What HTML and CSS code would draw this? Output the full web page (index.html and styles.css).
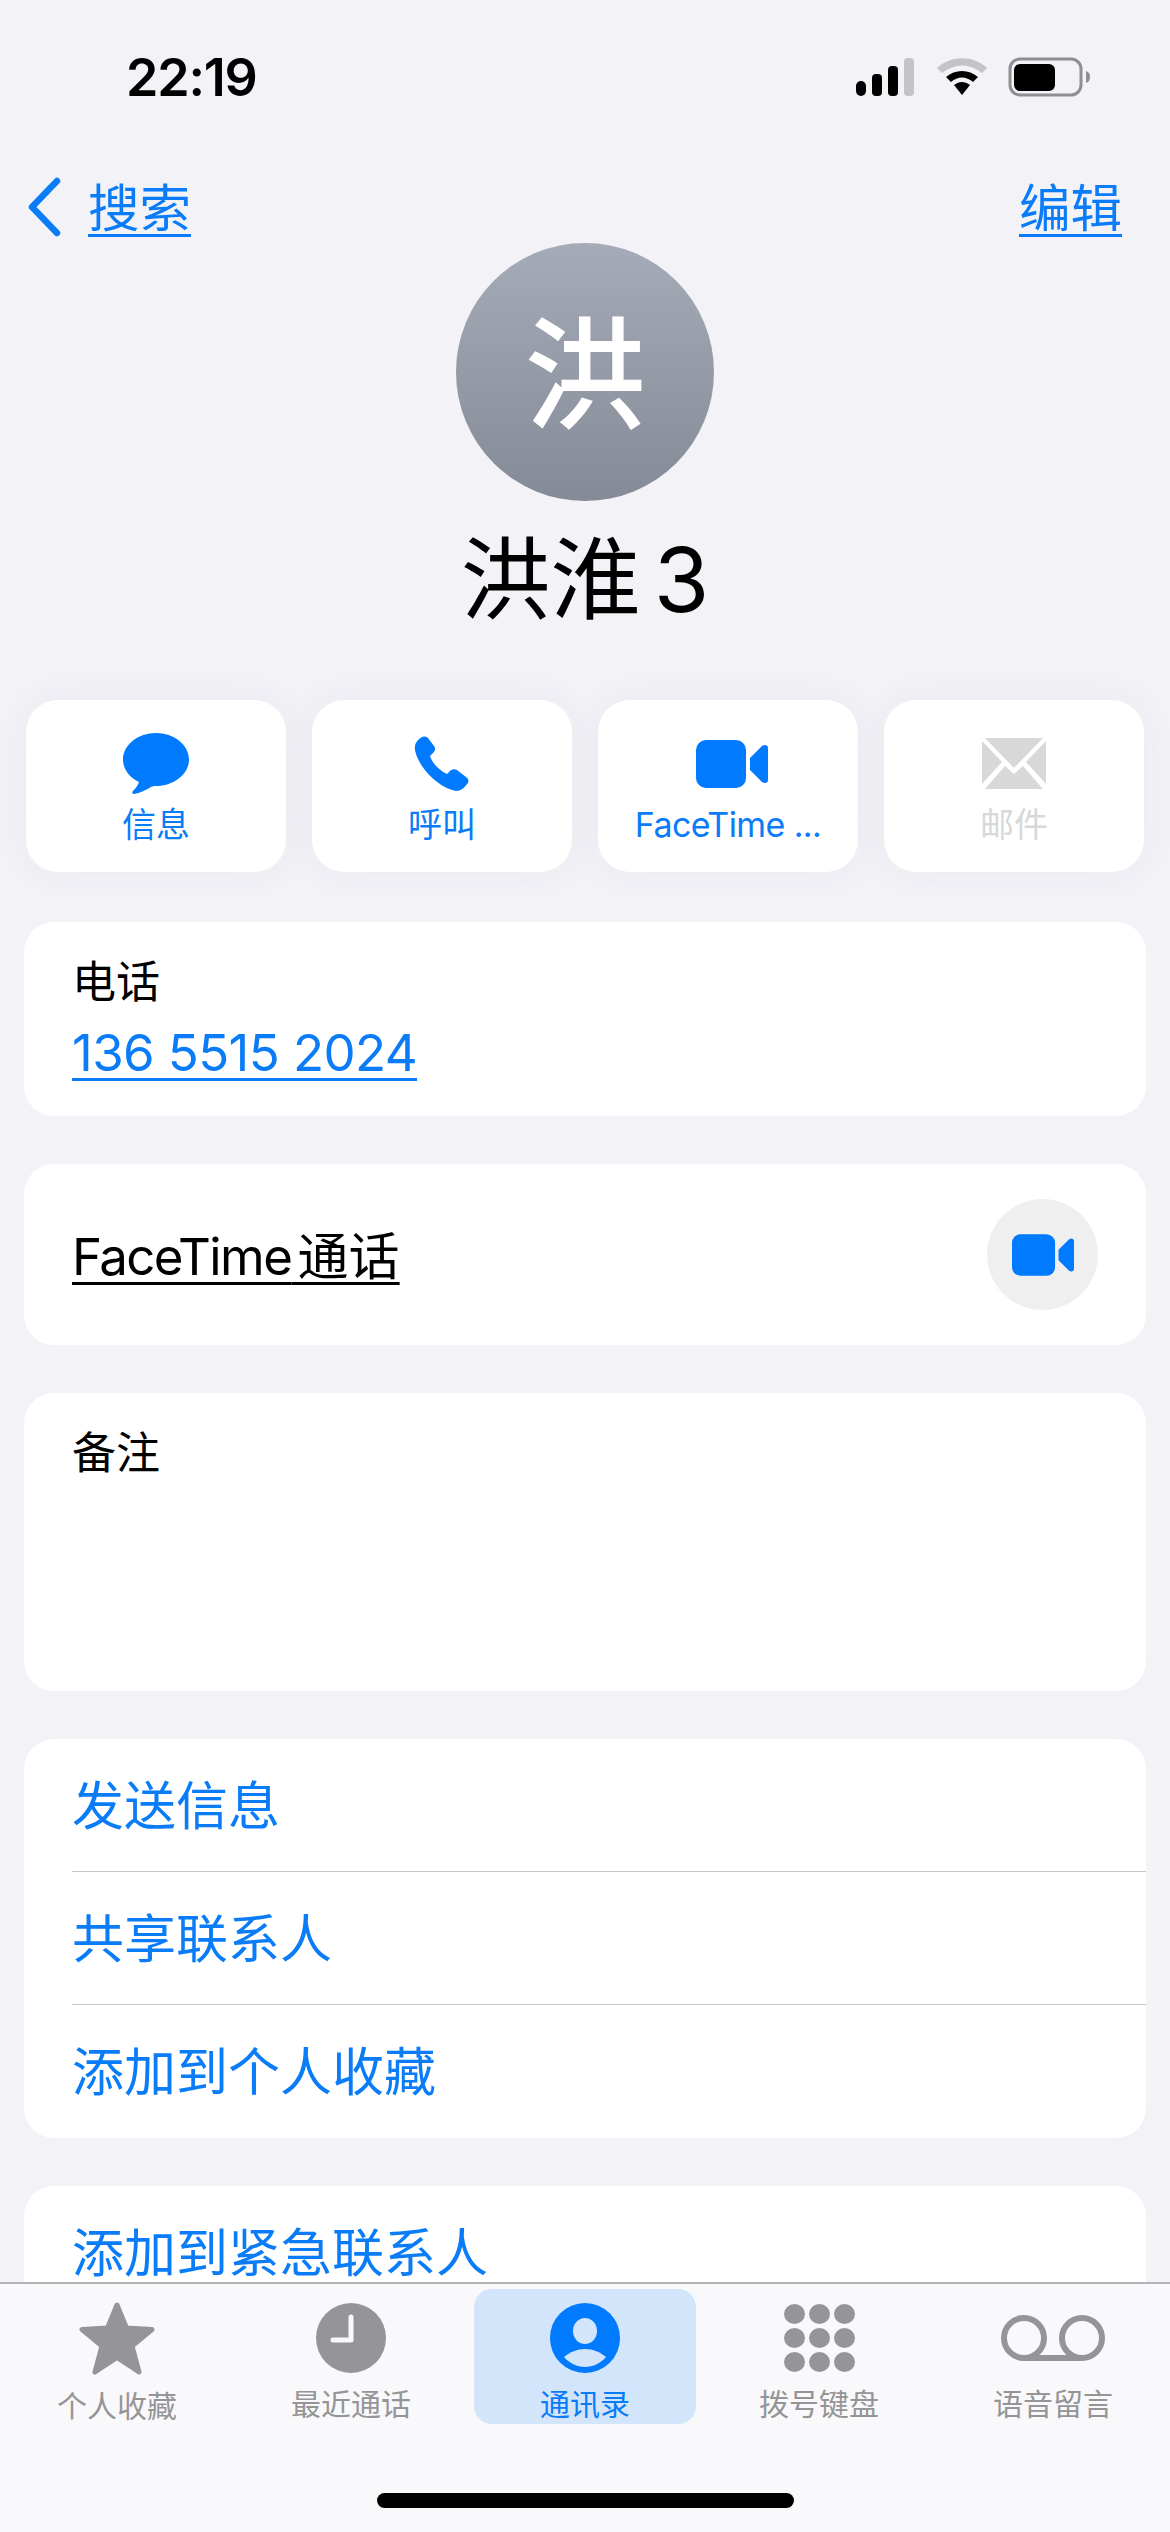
FILE: index.html
```html
<!DOCTYPE html>
<html lang="zh-CN">
  <head>
    <meta charset="UTF-8" />
    <meta name="viewport" content="width=device-width, initial-scale=1.0" />
    <title>洪淮 3</title>
    <link rel="stylesheet" href="styles.css">
  </head>
  <body>
    <div class="page">
      <div class="status-bar">
        <span class="time">22:19</span>
        <div class="status-icons">
          <svg class="signal" width="58" height="38" viewBox="0 0 58 38">
            <rect x="0" y="23" width="10" height="15" rx="5" fill="#000" />
            <rect x="16" y="16" width="10" height="22" rx="4" fill="#000" />
            <rect x="32" y="8" width="10" height="30" rx="4" fill="#000" />
            <rect x="48" y="0" width="10" height="38" rx="4" fill="#c4c4c8" />
          </svg>
          <svg class="wifi" width="50" height="38" viewBox="0 0 50 38">
            <path d="M0 10 C14 -3 36 -3 50 10 L45 15 C32 5 18 5 5 15 Z" fill="#c4c4c8" />
            <path d="M9 19 C18 11 32 11 41 19 L36 24 C29 18 21 18 14 24 Z" fill="#000" />
            <path d="M17 27 C22 23 28 23 33 27 L25 37 Z" fill="#000" />
          </svg>
          <svg class="battery" width="84" height="40" viewBox="0 0 84 40">
            <rect x="2" y="2" width="71" height="36" rx="10" fill="none" stroke="#8e8e93" stroke-width="3" />
            <rect x="6" y="7" width="41" height="27" rx="6" fill="#000" />
            <path d="M78 14 C81 15 82 17 82 20 C82 23 81 25 78 26 Z" fill="#8e8e93" />
          </svg>
        </div>
      </div>

      <div class="nav-bar">
        <a class="nav-back">
          <svg width="34" height="60" viewBox="0 0 34 60">
            <path d="M30 4 L5 30 L30 56" fill="none" stroke="#0a7cf7" stroke-width="6.5" stroke-linecap="round" stroke-linejoin="round" />
          </svg>
          <span class="link">搜索</span>
        </a>
        <a class="link">编辑</a>
      </div>

      <div class="contact-head">
        <div class="avatar">洪</div>
        <h1 class="contact-name">洪淮 3</h1>
      </div>

      <div class="action-row">
        <div class="action">
          <svg class="action-icon" width="66" height="62" viewBox="0 0 66 62">
            <path d="M33 0 C51 0 66 12 66 26.5 C66 41 51 53 33 53 C31 53 29.5 53 28 54 C23 57 17 60 11 61 C9 61 9 59 10 58 C13 55 15 52 16 49 C6 44 0 36 0 26.5 C0 12 15 0 33 0 Z" fill="#007aff" />
          </svg>
          <span>信息</span>
        </div>
        <div class="action">
          <svg class="action-icon" width="56" height="56" viewBox="0 0 56 56">
            <path d="M7 1.5 C9 0 12 0 14 2 L20 10 C22 13 21 15 19 17 L16 20 C18 27 26 35 33 38 L36 35 C38 33 41 32.5 43 34 L52 41 C55 43 55 46 53 48 C50 52 47 55 42 55 C30 53 16 42 8 30 C2 21 -1 12 2 7 C3 5 5 3 7 1.5 Z" fill="#007aff" />
          </svg>
          <span>呼叫</span>
        </div>
        <div class="action">
          <svg class="action-icon video-icon" width="72" height="48" viewBox="0 0 72 48">
            <rect x="0" y="0" width="50" height="48" rx="10" fill="#007aff" />
            <path d="M54 18 L66 6 C69 4 72 5 72 8 L72 40 C72 43 69 44 66 42 L54 30 Z" fill="#007aff" />
          </svg>
          <span class="action-latin">FaceTime ...</span>
        </div>
        <div class="action action-off">
          <svg class="action-icon" width="64" height="52" viewBox="0 0 64 52">
            <path d="M3 0 H61 L32 30 Z" fill="#d8d8d8" />
            <path d="M0 3 L20 24 L0 46 Z M64 3 L44 24 L64 46 Z" fill="#d8d8d8" />
            <path d="M3 51 L23 28 L32 36 L41 28 L61 51 Z" fill="#d8d8d8" />
          </svg>
          <span>邮件</span>
        </div>
      </div>

      <div class="card phone-card">
        <div class="field-label">电话</div>
        <a class="field-value link">136 5515 2024</a>
      </div>

      <div class="card facetime-card">
        <a class="facetime-label"><span class="facetime-word">FaceTime</span> 通话</a>
        <div class="round-btn">
          <svg width="62" height="42" viewBox="0 0 72 48">
            <rect x="0" y="0" width="50" height="48" rx="10" fill="#007aff" />
            <path d="M54 18 L66 6 C69 4 72 5 72 8 L72 40 C72 43 69 44 66 42 L54 30 Z" fill="#007aff" />
          </svg>
        </div>
      </div>

      <div class="card notes-card">
        <div class="field-label">备注</div>
      </div>

      <div class="card list-card">
        <div class="list-row">发送信息</div>
        <div class="list-row">共享联系人</div>
        <div class="list-row">添加到个人收藏</div>
      </div>

      <div class="card list-card">
        <div class="list-row">添加到紧急联系人</div>
      </div>

      <div class="tab-bar">
        <div class="tab">
          <div class="tab-icon">
            <svg width="76" height="74" viewBox="0 0 76 74">
              <path d="M38 3 L47.5 26 L73 27.5 L53 44 L60 70 L38 55.5 L16 70 L23 44 L3 27.5 L28.5 26 Z" fill="#959597" stroke="#959597" stroke-width="5" stroke-linejoin="round" />
            </svg>
          </div>
          <span>个人收藏</span>
        </div>
        <div class="tab">
          <div class="tab-icon">
            <svg width="70" height="70" viewBox="0 0 70 70">
              <circle cx="35" cy="35" r="35" fill="#959597" />
              <path d="M35 14 V37 H17" fill="none" stroke="#f9f9fb" stroke-width="5" stroke-linecap="round" stroke-linejoin="round" />
            </svg>
          </div>
          <span>最近通话</span>
        </div>
        <div class="tab tab-active">
          <div class="tab-icon">
            <svg width="70" height="70" viewBox="0 0 70 70">
              <circle cx="35" cy="35" r="35" fill="#007aff" />
              <ellipse cx="35" cy="28" rx="12" ry="13" fill="#d2e5fb" />
              <path d="M14 54 C20 49 27 46 35 46 C43 46 50 49 56 54 C51 60 43 64 35 64 C27 64 19 60 14 54 Z" fill="#d2e5fb" />
            </svg>
          </div>
          <span>通讯录</span>
        </div>
        <div class="tab">
          <div class="tab-icon">
            <div class="keypad">
              <i></i><i></i><i></i>
              <i></i><i></i><i></i>
              <i></i><i></i><i></i>
            </div>
          </div>
          <span>拨号键盘</span>
        </div>
        <div class="tab">
          <div class="tab-icon">
            <svg width="104" height="46" viewBox="0 0 104 46">
              <circle cx="23" cy="23" r="20" fill="none" stroke="#959597" stroke-width="6" />
              <circle cx="81" cy="23" r="20" fill="none" stroke="#959597" stroke-width="6" />
              <path d="M23 43 H81" fill="none" stroke="#959597" stroke-width="6" />
            </svg>
          </div>
          <span>语音留言</span>
        </div>
        <div class="home-bar"></div>
      </div>
    </div>
  </body>
</html>
```

FILE: styles.css
```css
body {
  margin: 0;
  padding: 0;
  font-family: Inter, "Noto Sans CJK SC", sans-serif;
  background-color: #f2f2f7;
  color: #000;
}

.page {
  position: relative;
  width: 1170px;
  height: 2532px;
  overflow: hidden;
}

.link {
  color: #0a7cf7;
  text-decoration: underline;
  text-decoration-thickness: 3px;
  text-underline-offset: 7px;
}

/* status bar */
.status-bar {
  display: flex;
  justify-content: space-between;
  align-items: center;
  height: 38px;
  padding: 58px 79px 0 126px;
}

.time {
  font-size: 52px;
  font-weight: 600;
  letter-spacing: -1.2px;
}

.status-icons {
  display: flex;
  align-items: center;
  gap: 21px;
}

.signal {
  margin-right: 2px;
}

.battery {
  margin-right: -1px;
}

/* nav */
.nav-bar {
  display: flex;
  justify-content: space-between;
  align-items: center;
  height: 60px;
  margin-top: 81px;
  padding: 0 48px 0 27px;
  font-size: 51.5px;
}

.nav-back {
  display: flex;
  align-items: center;
  gap: 27px;
}

.nav-bar .link {
  position: relative;
  top: -3px;
}

/* avatar + name */
.contact-head {
  display: flex;
  flex-direction: column;
  align-items: center;
  margin-top: 6px;
}

.avatar {
  display: flex;
  align-items: center;
  justify-content: center;
  box-sizing: border-box;
  width: 258px;
  height: 258px;
  padding-bottom: 14px;
  border-radius: 50%;
  background: linear-gradient(#a6abb8, #858a97);
  color: #fff;
  font-size: 122px;
  font-weight: 500;
}

.contact-name {
  margin: 15px 0 0;
  font-size: 90px;
  font-weight: 400;
  line-height: 128px;
  word-spacing: -12px;
}

/* four action buttons */
.action-row {
  display: flex;
  gap: 26px;
  margin: 56px 24px 0 26px;
}

.action {
  display: flex;
  flex-direction: column;
  align-items: center;
  width: 260px;
  height: 172px;
  border-radius: 32px;
  background-color: #fff;
  box-shadow: 0 0 40px rgba(60, 60, 90, 0.05);
  color: #0a7cf7;
  font-size: 34px;
  line-height: 44px;
}

.action-icon {
  display: block;
  margin-top: 33px;
  height: 62px;
}

.video-icon {
  margin-left: 8px;
}

.action span {
  margin-top: 8px;
}

.action .action-latin {
  letter-spacing: -0.6px;
}

.action-off {
  color: #d8d8d8;
}

/* cards */
.card {
  margin: 48px 24px 0;
  border-radius: 30px;
  background-color: #fff;
}

.phone-card {
  height: 194px;
  margin-top: 50px;
  padding-top: 34px;
  box-sizing: border-box;
}

.field-label {
  padding-left: 48px;
  font-size: 44px;
  line-height: 52px;
}

.field-value {
  display: inline-block;
  margin: 14px 0 0 48px;
  font-size: 51px;
  line-height: 62px;
  letter-spacing: -0.6px;
}

.facetime-card {
  display: flex;
  align-items: center;
  justify-content: space-between;
  height: 181px;
  padding: 0 48px;
}

.facetime-label {
  margin-bottom: 3px;
  font-size: 51px;
  word-spacing: -8px;
  text-decoration: underline;
  text-decoration-thickness: 3px;
  text-underline-offset: 7px;
}

.facetime-word {
  letter-spacing: -1.6px;
}

.round-btn {
  display: flex;
  align-items: center;
  justify-content: center;
  width: 111px;
  height: 111px;
  border-radius: 50%;
  background-color: #efeff0;
}

.notes-card {
  height: 298px;
  padding-top: 34px;
  box-sizing: border-box;
}

.list-card {
  padding-left: 48px;
}

.list-row {
  box-sizing: border-box;
  height: 133px;
  padding-top: 4px;
  line-height: 128px;
  font-size: 52px;
  color: #0a7cf7;
  border-bottom: 1px solid #c6c6c8;
}

.list-row:last-child {
  border-bottom: none;
}

/* tab bar sits over the scrolling list */
.tab-bar {
  position: absolute;
  left: 0;
  right: 0;
  bottom: 0;
  height: 250px;
  box-sizing: border-box;
  display: grid;
  grid-template-columns: repeat(5, 234px);
  grid-template-rows: 135px;
  padding-top: 5px;
  border-top: 2px solid #b4b4b6;
  background-color: #f9f9fb;
}

.tab {
  display: flex;
  flex-direction: column;
  align-items: center;
  margin: 0 6px;
  border-radius: 18px;
  color: #959597;
  font-size: 30px;
  line-height: 40px;
}

.tab-active {
  background-color: #d2e5fb;
  color: #0a7cf7;
}

.tab-icon {
  display: flex;
  align-items: center;
  justify-content: center;
  height: 74px;
  margin-top: 13px;
  margin-bottom: 10px;
}

.keypad {
  display: grid;
  grid-template-columns: repeat(3, 21px);
  grid-auto-rows: 20px;
  gap: 4px;
}

.keypad i {
  border-radius: 50%;
  background-color: #959597;
}

.home-bar {
  position: absolute;
  left: 377px;
  bottom: 24px;
  width: 417px;
  height: 15px;
  border-radius: 8px;
  background-color: #000;
}
```
